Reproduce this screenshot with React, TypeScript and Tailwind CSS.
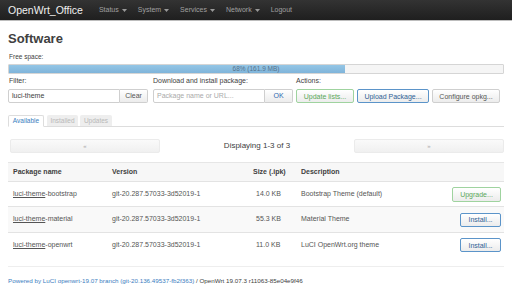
import React from "react";

const Caret = () => (
  <svg width="5" height="3" viewBox="0 0 5 3" className="ml-[3px] mt-[1px]">
    <path d="M0 0 L5 0 L2.5 3 Z" fill="#999" />
  </svg>
);

const MenuItem = ({ label, caret = true }: { label: string; caret?: boolean }) => (
  <div className="flex items-center text-[7px] text-[#a0a0a0]">
    <span>{label}</span>
    {caret && <Caret />}
  </div>
);

const Btn = ({
  children,
  kind = "default",
  className = "",
}: {
  children: React.ReactNode;
  kind?: "default" | "green" | "blue";
  className?: string;
}) => {
  const k =
    kind === "green"
      ? "border-[#9fd39f] text-[#5aa85a]"
      : kind === "blue"
      ? "border-[#5b94c9] text-[#2f5f95]"
      : "border-[#cfcfcf] text-[#555]";
  return (
    <div
      className={`flex items-center justify-center h-[14px] rounded-[2px] border bg-gradient-to-b from-white to-[#ececec] text-[7px] leading-none ${k} ${className}`}
    >
      {children}
    </div>
  );
};

const rows = [
  { name: "bootstrap", size: "14.0 KB", desc: "Bootstrap Theme (default)", action: "Upgrade...", kind: "green" as const, bg: "bg-white", h: "h-[25px]" },
  { name: "material", size: "55.3 KB", desc: "Material Theme", action: "Install...", kind: "blue" as const, bg: "bg-[#f9f9f9]", h: "h-[26px]" },
  { name: "openwrt", size: "11.0 KB", desc: "LuCI OpenWrt.org theme", action: "Install...", kind: "blue" as const, bg: "bg-white", h: "h-[25px]" },
];

export default function App() {
  return (
    <div
      className="w-[512px] h-[306px] bg-white overflow-hidden text-[#404040]"
      style={{ fontFamily: '"Liberation Sans", Arial, sans-serif' }}
    >
      {/* Header */}
      <div className="h-[21px] bg-gradient-to-b from-[#333] to-[#1f1f1f] border-b border-[#bdbdbd] flex items-center px-2">
        <div className="text-[10.5px] text-[#f0f0f0] leading-none mr-[16px]">OpenWrt_Office</div>
        <div className="flex items-center gap-[11px]">
          <MenuItem label="Status" />
          <MenuItem label="System" />
          <MenuItem label="Services" />
          <MenuItem label="Network" />
          <MenuItem label="Logout" caret={false} />
        </div>
      </div>

      <div className="px-2">
        <h2 className="mt-[10px] h-[16px] leading-[16px] text-[13px] font-bold text-[#404040]">Software</h2>

        <div className="mt-[5px] h-[10px] leading-[10px] text-[6.5px] text-[#404040] pl-[1px]">Free space:</div>
        <div className="mt-[2px] h-[10px] relative border border-[#d5d5d5] bg-[#f5f5f5] rounded-[1px]">
          <div className="h-full w-[68%] bg-gradient-to-b from-[#94c6e6] to-[#7fb4da]" />
          <div className="absolute inset-0 flex items-center justify-center text-[6.5px] text-[#55728c]">
            68% (161.9 MB)
          </div>
        </div>

        {/* Form row */}
        <div className="mt-[2px] flex">
          <div className="w-[140px]">
            <div className="h-[10px] leading-[10px] text-[7px] pl-[1px]">Filter:</div>
            <div className="mt-[3px] flex h-[14px]">
              <div className="flex-1 border border-[#cfcfcf] rounded-l-[2px] flex items-center px-[3px] text-[7px] text-[#404040]">
                luci-theme
              </div>
              <div className="w-[28px] border border-l-0 border-[#cfcfcf] rounded-r-[2px] bg-gradient-to-b from-white to-[#ececec] flex items-center justify-center text-[7px] text-[#555]">
                Clear
              </div>
            </div>
          </div>
          <div className="w-[140px] ml-[5px]">
            <div className="h-[10px] leading-[10px] text-[7px]">Download and install package:</div>
            <div className="mt-[3px] flex h-[14px]">
              <div className="flex-1 border border-[#cfcfcf] rounded-l-[2px] flex items-center px-[3px] text-[7px] text-[#aaa]">
                Package name or URL...
              </div>
              <div className="w-[28px] border border-l-0 border-[#cfcfcf] rounded-r-[2px] bg-gradient-to-b from-white to-[#ececec] flex items-center justify-center text-[7px] text-[#2f6ab0]">
                OK
              </div>
            </div>
          </div>
          <div className="ml-[3px] flex-1">
            <div className="h-[10px] leading-[10px] text-[7px]">Actions:</div>
            <div className="mt-[3px] flex gap-[3px]">
              <Btn kind="green" className="w-[58px]">Update lists...</Btn>
              <Btn kind="blue" className="w-[72px]">Upload Package...</Btn>
              <Btn className="w-[68px]">Configure opkg...</Btn>
            </div>
          </div>
        </div>

        {/* Tabs */}
        <div className="mt-[12px] flex items-end h-[12px] border-b border-[#ddd]">
          <div className="h-[12px] w-[36px] -mb-px border border-b-white border-[#ddd] bg-white rounded-t-[2px] flex items-center justify-center text-[6.5px] text-[#3a7ec0]">
            Available
          </div>
          <div className="ml-[3px] h-[11px] w-[31px] bg-[#eeeeee] rounded-t-[2px] flex items-center justify-center text-[6.5px] text-[#b8b8b8]">
            Installed
          </div>
          <div className="ml-[2px] h-[11px] w-[32px] bg-[#eeeeee] rounded-t-[2px] flex items-center justify-center text-[6.5px] text-[#b8b8b8]">
            Updates
          </div>
        </div>

        {/* Pagination */}
        <div className="mt-[12px] flex items-center h-[14px]">
          <div className="ml-[2px] w-[150px] h-[14px] rounded-[2px] border border-[#ebebeb] bg-gradient-to-b from-[#fafafa] to-[#f0f0f0] flex items-center justify-center text-[6px] text-[#aaa]">
            «
          </div>
          <div className="flex-1 text-center text-[8px] text-[#404040]">Displaying 1-3 of 3</div>
          <div className="w-[150px] h-[14px] rounded-[2px] border border-[#ebebeb] bg-gradient-to-b from-[#fafafa] to-[#f0f0f0] flex items-center justify-center text-[6px] text-[#aaa]">
            »
          </div>
        </div>

        {/* Table */}
        <div className="mt-[9px] text-[7px]">
          <div className="h-[19px] flex items-center bg-[#f7f7f7] border-t border-[#e6e6e6] font-bold text-[#404040]">
            <div className="w-[104px] pl-[5px]">Package name</div>
            <div className="w-[141px]">Version</div>
            <div className="w-[48px]">Size (.ipk)</div>
            <div className="flex-1">Description</div>
          </div>
          {rows.map((r) => (
            <div key={r.name} className={`${r.h} ${r.bg} flex items-center border-t border-[#e3e3e3] text-[#555]`}>
              <div className="w-[104px] pl-[5px]">
                <span className="underline">luci-theme</span>-{r.name}
              </div>
              <div className="w-[141px]">git-20.287.57033-3d52019-1</div>
              <div className="w-[48px] pl-[3px]">{r.size}</div>
              <div className="flex-1">{r.desc}</div>
              <div className="pr-[3px]">
                <Btn kind={r.kind} className={r.kind === "green" ? "w-[49px] h-[15px]" : "w-[41px] h-[13px]"}>
                  {r.action}
                </Btn>
              </div>
            </div>
          ))}
        </div>

        {/* Footer */}
        <div className="mt-[9px] border-t border-[#eee]" />
        <div className="mt-[9px] text-[6.25px] leading-[10px]">
          <span className="text-[#3b7dc0]">Powered by LuCI openwrt-19.07 branch (git-20.136.49537-fb2f363)</span>
          <span className="text-[#404040]"> / OpenWrt 19.07.3 r11063-85e04e9f46</span>
        </div>
      </div>
    </div>
  );
}
